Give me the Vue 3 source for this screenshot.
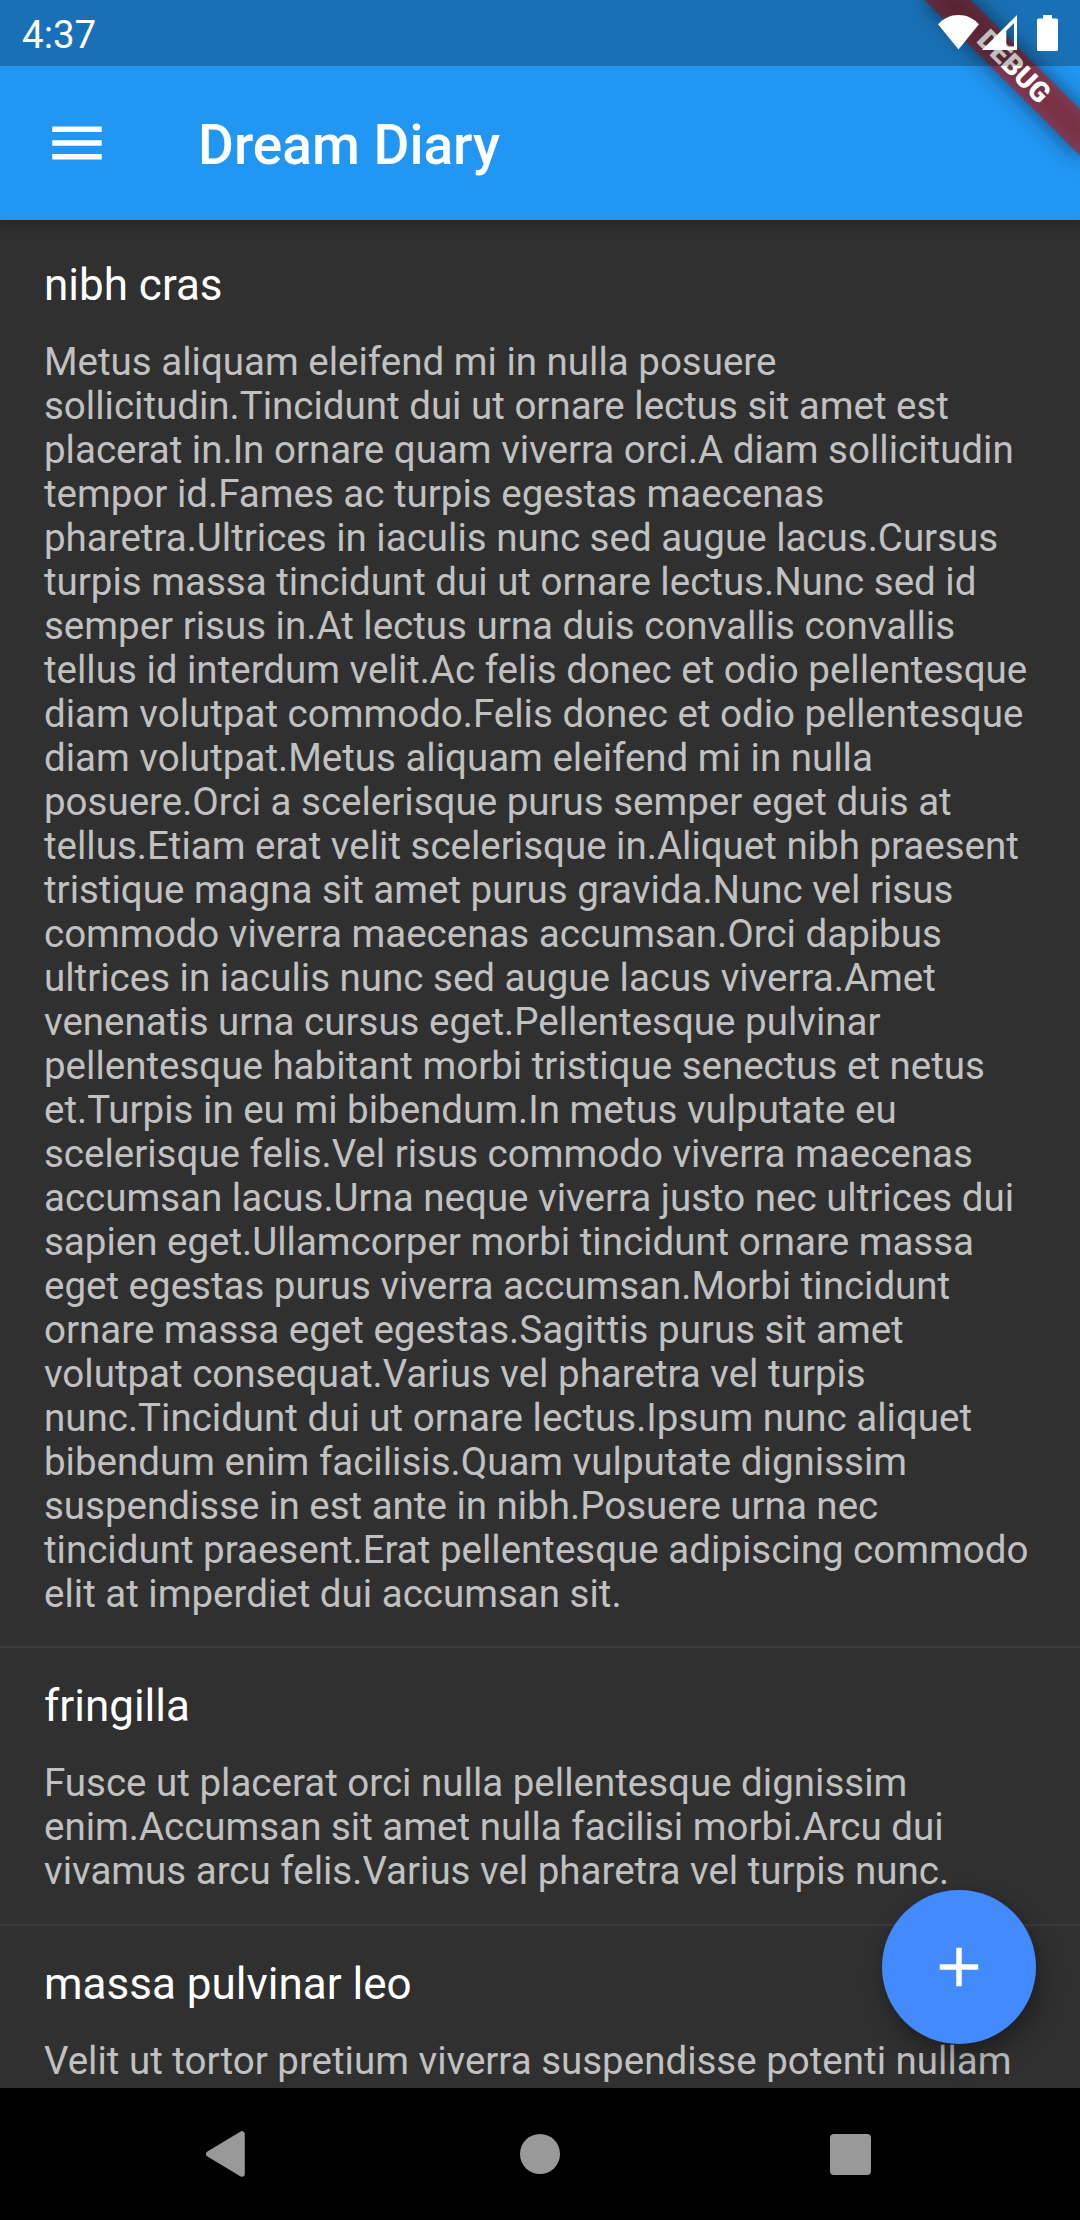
<script setup>
const entries = [
  {
    title: 'nibh cras',
    body: `Metus aliquam eleifend mi in nulla posuere
sollicitudin.Tincidunt dui ut ornare lectus sit amet est
placerat in.In ornare quam viverra orci.A diam sollicitudin
tempor id.Fames ac turpis egestas maecenas
pharetra.Ultrices in iaculis nunc sed augue lacus.Cursus
turpis massa tincidunt dui ut ornare lectus.Nunc sed id
semper risus in.At lectus urna duis convallis convallis
tellus id interdum velit.Ac felis donec et odio pellentesque
diam volutpat commodo.Felis donec et odio pellentesque
diam volutpat.Metus aliquam eleifend mi in nulla
posuere.Orci a scelerisque purus semper eget duis at
tellus.Etiam erat velit scelerisque in.Aliquet nibh praesent
tristique magna sit amet purus gravida.Nunc vel risus
commodo viverra maecenas accumsan.Orci dapibus
ultrices in iaculis nunc sed augue lacus viverra.Amet
venenatis urna cursus eget.Pellentesque pulvinar
pellentesque habitant morbi tristique senectus et netus
et.Turpis in eu mi bibendum.In metus vulputate eu
scelerisque felis.Vel risus commodo viverra maecenas
accumsan lacus.Urna neque viverra justo nec ultrices dui
sapien eget.Ullamcorper morbi tincidunt ornare massa
eget egestas purus viverra accumsan.Morbi tincidunt
ornare massa eget egestas.Sagittis purus sit amet
volutpat consequat.Varius vel pharetra vel turpis
nunc.Tincidunt dui ut ornare lectus.Ipsum nunc aliquet
bibendum enim facilisis.Quam vulputate dignissim
suspendisse in est ante in nibh.Posuere urna nec
tincidunt praesent.Erat pellentesque adipiscing commodo
elit at imperdiet dui accumsan sit.`,
  },
  {
    title: 'fringilla',
    body: `Fusce ut placerat orci nulla pellentesque dignissim
enim.Accumsan sit amet nulla facilisi morbi.Arcu dui
vivamus arcu felis.Varius vel pharetra vel turpis nunc.`,
  },
  {
    title: 'massa pulvinar leo',
    body: 'Velit ut tortor pretium viverra suspendisse potenti nullam',
  },
]
</script>

<template>
  <div class="screen">
    <header class="app-bar">
      <svg class="menu" viewBox="0 0 24 24"><path d="M3 18h18v-2H3v2zm0-5h18v-2H3v2zm0-7v2h18V6H3z" fill="#fff" /></svg>
      <h1 class="app-title">Dream Diary</h1>
    </header>

    <main class="list">
      <article v-for="entry in entries" :key="entry.title" class="entry">
        <h2 class="entry-title">{{ entry.title }}</h2>
        <p class="entry-body">{{ entry.body }}</p>
      </article>
    </main>

    <nav class="nav-bar">
      <svg class="back" viewBox="0 0 39 46"><path d="M3 23L35.8 3.2V42.8Z" fill="#999" stroke="#999" stroke-width="6" stroke-linejoin="round" /></svg>
      <span class="home"></span>
      <span class="recents"></span>
    </nav>

    <button class="fab" aria-label="Add">
      <svg viewBox="0 0 24 24"><path d="M19 13h-6v6h-2v-6H5v-2h6V5h2v6h6v2z" fill="#fff" /></svg>
    </button>

    <div class="banner-shadow"></div>
    <div class="banner">DEBUG</div>

    <div class="status-bar">
      <span class="time">4:37</span>
      <svg class="wifi" viewBox="0 0 41 36"><path d="M20.5 34.5L0 9.3C5.6 3.3 12.4 0 20.5 0S35.4 3.3 41 9.3Z" fill="#fff" /></svg>
      <svg class="signal" viewBox="0 0 35 36"><path fill-rule="evenodd" d="M35 0V35H0ZM32 8L24.3 15.7V31.5H32Z" fill="#fff" /></svg>
      <svg class="battery" viewBox="0 0 21 36"><path d="M6 0H15V3.5H19.5Q21 3.5 21 5V34.5Q21 36 19.5 36H1.5Q0 36 0 34.5V5Q0 3.5 1.5 3.5H6Z" fill="#fff" /></svg>
    </div>
  </div>
</template>

<style>
body {
  margin: 0;
  background: #303030;
}
</style>

<style scoped>
.screen {
  position: relative;
  display: flex;
  flex-direction: column;
  width: 1080px;
  height: 2220px;
  overflow: hidden;
  background: #303030;
  color: #fff;
  font-family: Roboto, sans-serif;
}

.app-bar {
  position: relative;
  z-index: 1;
  flex: none;
  display: flex;
  align-items: center;
  gap: 88px;
  box-sizing: border-box;
  height: 220px;
  padding: 66px 44px 0;
  background: #2196f3;
  box-shadow: 0 4px 14px rgba(0, 0, 0, 0.3);
}

.menu {
  width: 66px;
  height: 66px;
}

.app-title {
  margin: 0;
  padding-top: 4px;
  font-size: 55px;
  font-weight: 500;
  line-height: 66px;
}

.list {
  flex: 1;
  min-height: 0;
  padding-top: 7px;
  overflow: hidden;
}

.entry {
  padding: 32px 44px 30px;
}

.entry + .entry {
  border-top: 2px solid #3c3c3c;
  padding-bottom: 31px;
}

.entry-title {
  margin: 0 0 29px;
  font-size: 44px;
  font-weight: 400;
  line-height: 52px;
}

.entry-body {
  margin: 0;
  color: #c1c1c1;
  font-size: 38.5px;
  line-height: 44px;
  white-space: pre;
}

.nav-bar {
  flex: none;
  display: flex;
  align-items: center;
  box-sizing: border-box;
  height: 132px;
  padding-left: 206px;
  background: #000;
}

.back {
  width: 39px;
  height: 46px;
}

.home {
  width: 40px;
  height: 40px;
  margin-left: 275px;
  border-radius: 50%;
  background: #999;
}

.recents {
  width: 41px;
  height: 41px;
  margin-left: 270px;
  border-radius: 4px;
  background: #999;
}

.fab {
  position: absolute;
  right: 44px;
  bottom: 176px;
  display: flex;
  align-items: center;
  justify-content: center;
  width: 154px;
  height: 154px;
  padding: 0;
  border: 0;
  border-radius: 50%;
  background: #448aff;
  box-shadow: 5px 13px 26px rgba(0, 0, 0, 0.3), 0 2px 8px rgba(0, 0, 0, 0.1);
}

.fab svg {
  width: 66px;
  height: 66px;
}

.banner,
.banner-shadow {
  position: absolute;
  z-index: 2;
  top: 49.6px;
  right: -43.9px;
  width: 220px;
  height: 33px;
  transform: rotate(45deg);
}

.banner-shadow {
  background: rgba(0, 0, 0, 0.5);
  filter: blur(11px);
}

.banner {
  background: rgba(183, 28, 28, 0.627);
  font-size: 28.05px;
  font-weight: 900;
  line-height: 33px;
  text-align: center;
}

.status-bar {
  position: absolute;
  z-index: 3;
  top: 0;
  left: 0;
  display: flex;
  align-items: flex-start;
  box-sizing: border-box;
  width: 1080px;
  height: 66px;
  padding: 15px 22px 0;
  background: rgba(0, 0, 0, 0.25);
}

.time {
  margin-right: auto;
  font-size: 38.5px;
  line-height: 39px;
}

.wifi {
  width: 41px;
  height: 36px;
}

.signal {
  width: 35px;
  height: 36px;
  margin-left: 3px;
}

.battery {
  width: 21px;
  height: 36px;
  margin-left: 20px;
}
</style>
